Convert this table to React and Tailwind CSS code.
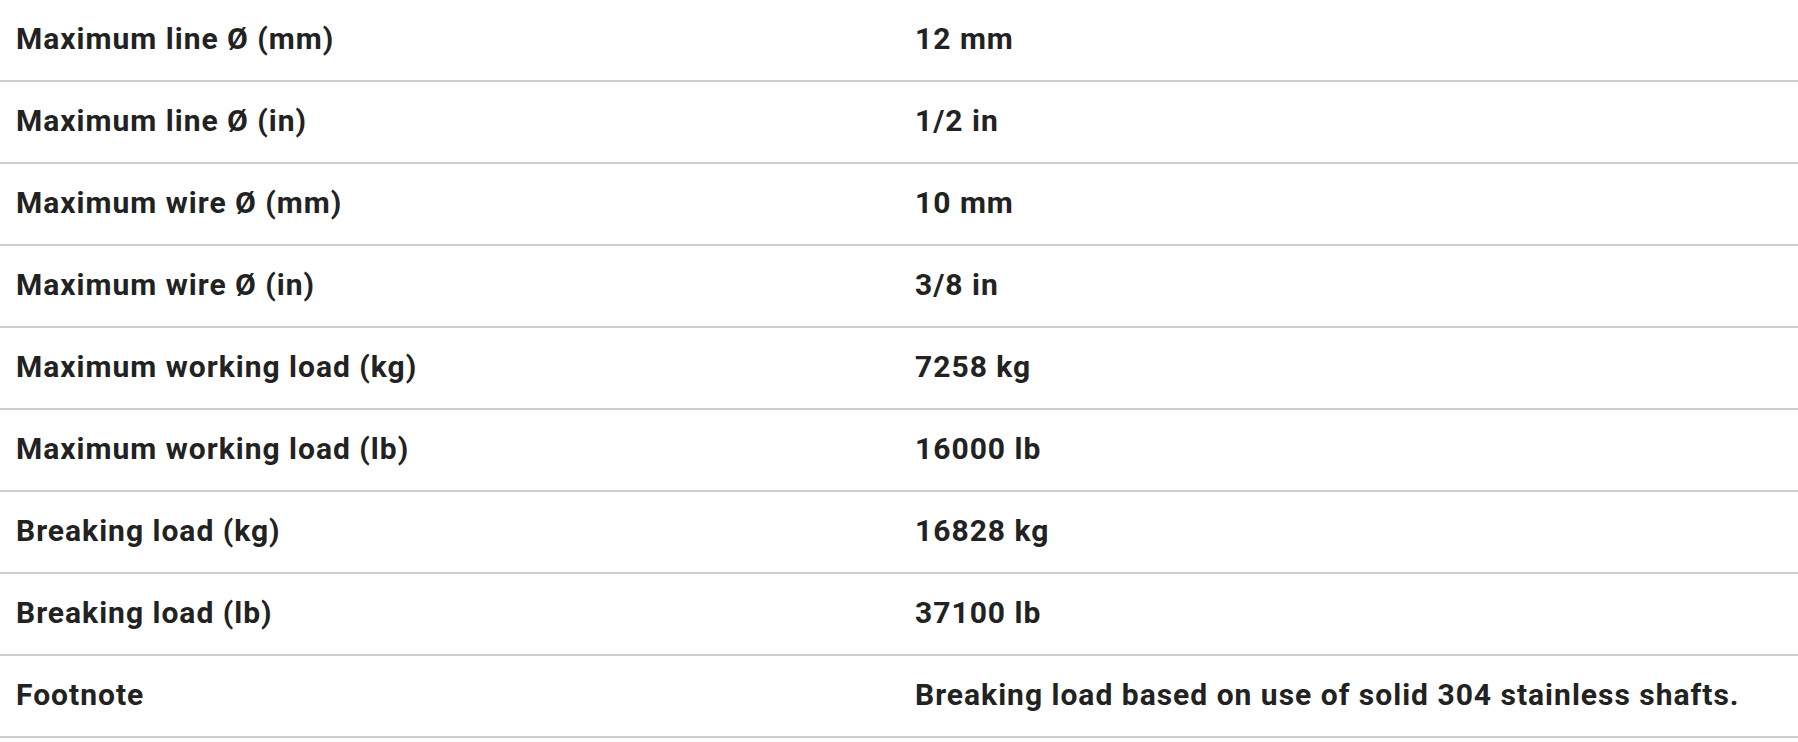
export default function App() {
  const rows = [
    ["Maximum line Ø (mm)", "12 mm"],
    ["Maximum line Ø (in)", "1/2 in"],
    ["Maximum wire Ø (mm)", "10 mm"],
    ["Maximum wire Ø (in)", "3/8 in"],
    ["Maximum working load (kg)", "7258 kg"],
    ["Maximum working load (lb)", "16000 lb"],
    ["Breaking load (kg)", "16828 kg"],
    ["Breaking load (lb)", "37100 lb"],
    ["Footnote", "Breaking load based on use of solid 304 stainless shafts."],
  ];
  return (
    <div className="w-[1798px] bg-white text-[#222222] font-['Roboto',sans-serif] font-bold text-[30px] tracking-[1px]">
      {rows.map(([k, v]) => (
        <div key={k} className="grid grid-cols-2 h-[82px] pb-1 border-b-2 border-[#cccccc] items-center">
          <div className="px-4">{k}</div>
          <div className="px-4">{v}</div>
        </div>
      ))}
    </div>
  );
}
